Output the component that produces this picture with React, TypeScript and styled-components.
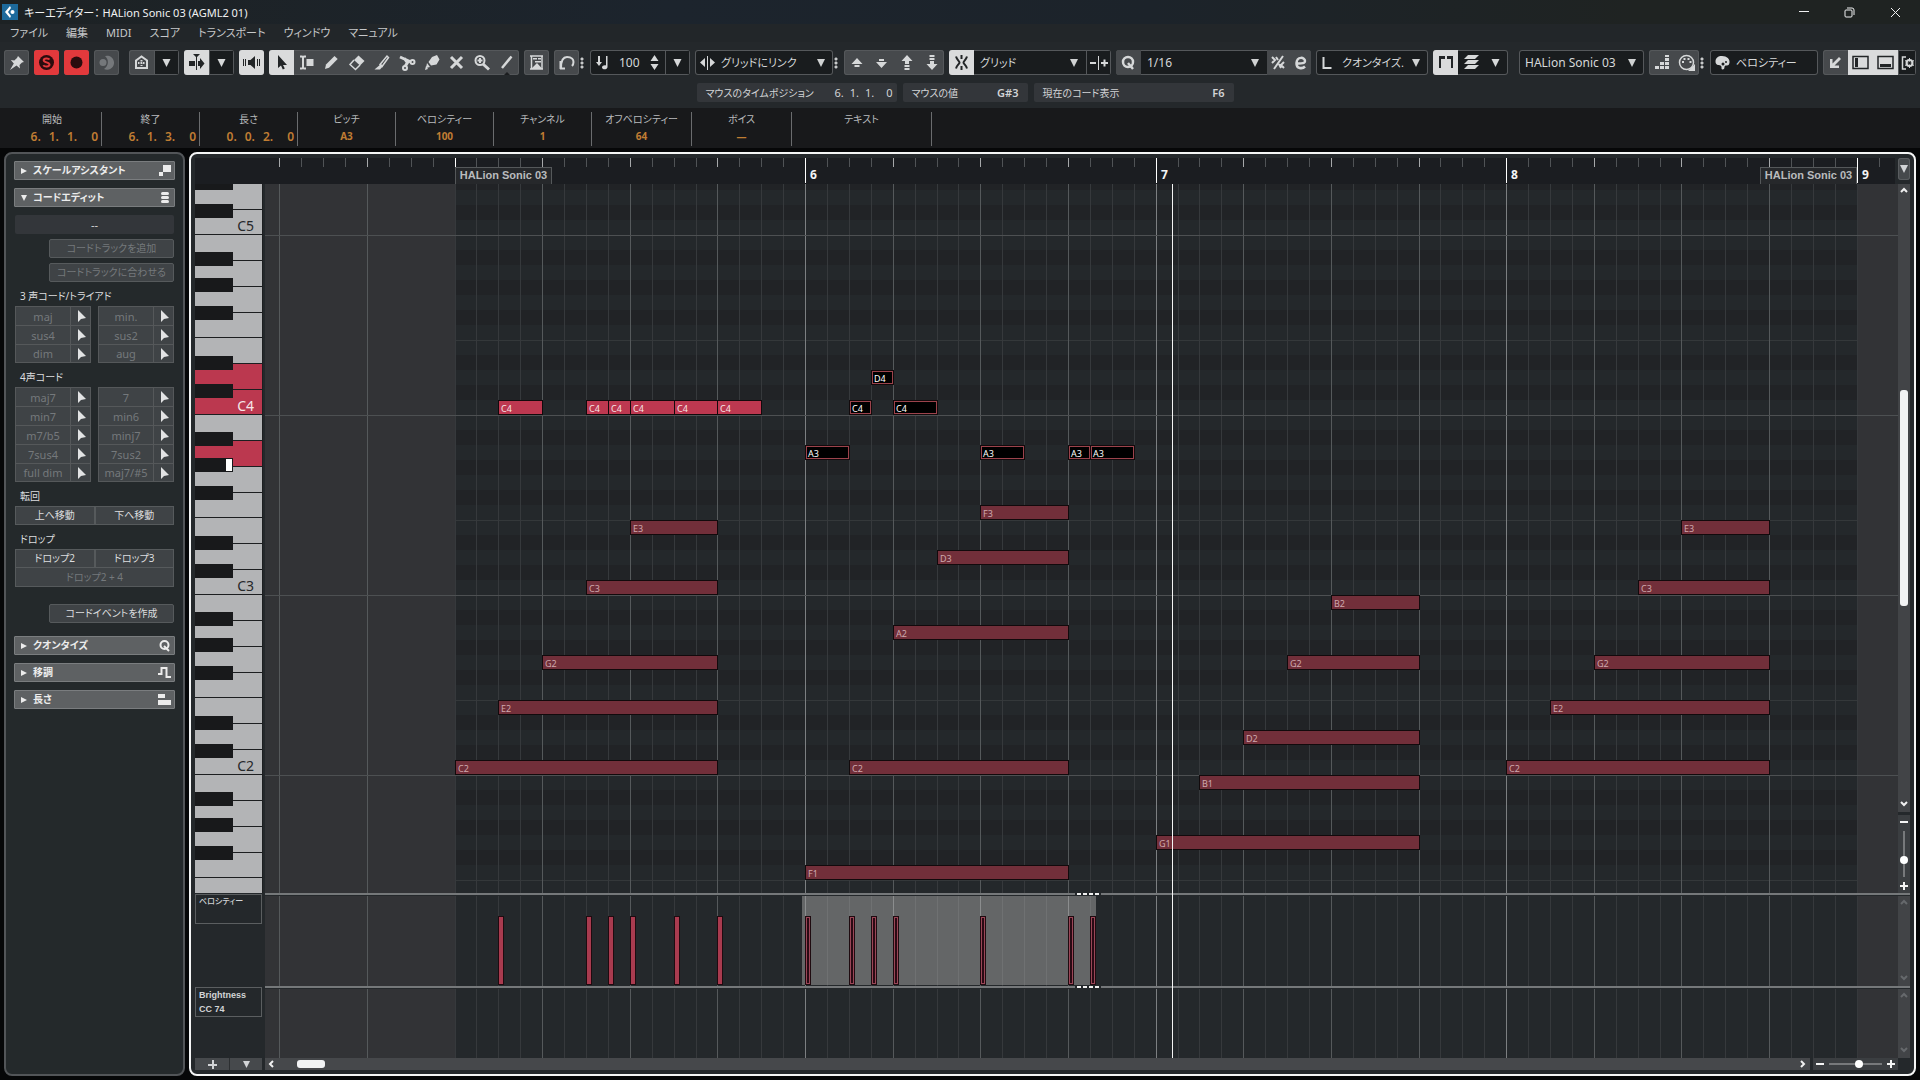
import React from "react";
import styled, { createGlobalStyle, css } from "styled-components";

/* ---------- base ---------- */

const GlobalStyle = createGlobalStyle`
  * { box-sizing: border-box; }
  body {
    margin: 0;
    background: #060708;
    color: #d2d4d6;
    font-family: "Noto Sans", "Noto Sans CJK JP", sans-serif;
    font-feature-settings: "palt";
    font-size: 11px;
  }
  button, input, select {
    font: inherit;
    font-feature-settings: inherit;
    color: inherit;
    margin: 0;
    padding: 0;
    border: 0;
    background: none;
  }
`;

const Window = styled.div`
  display: flex;
  flex-direction: column;
  height: 100vh;
  min-height: 700px;
  overflow: hidden;
`;

/* ---------- title and menu ---------- */

const TitleBar = styled.header`
  display: flex;
  align-items: center;
  height: 24px;
  flex: none;
  padding: 0 2px;
  gap: 6px;
  background: linear-gradient(90deg, #1d2224, #1c242d 35%, #1c232a 60%, #1f2322 85%);
`;

const Title = styled.h1`
  flex: 1;
  margin: 0;
  font-size: 11px;
  font-weight: 400;
  color: #f0f1f2;
  white-space: pre;
`;

const WindowButton = styled.button`
  width: 46px;
  height: 20px;
  display: grid;
  place-items: center;
  color: #f0f1f2;
`;

const WindowButtons = styled.div`
  display: flex;
`;

const MenuBar = styled.nav`
  display: flex;
  height: 18px;
  flex: none;
  padding-left: 1px;
  background: #222629;
`;

const MenuItem = styled.button`
  padding: 0 9px;
  font-size: 11px;
  line-height: 18px;
  color: #c6c8ca;
`;

/* ---------- toolbar ---------- */

const Toolbar = styled.div`
  display: flex;
  gap: 5px;
  flex: none;
  padding: 8px 4px;
  background: #24282b;
`;

const Group = styled.div<{ $w?: number; $gap?: number; $grow?: boolean; $dark?: boolean }>`
  display: flex;
  height: 25px;
  flex: ${(p) => (p.$grow ? "1 1 0" : "none")};
  width: ${(p) => (p.$w ? p.$w + "px" : "auto")};
  margin-right: ${(p) => p.$gap || 0}px;
  border-radius: 3px;
  overflow: hidden;
  background: ${(p) => (p.$dark ? "#191c1e" : "#46494c")};
  box-shadow: inset 0 0 0 1px #55585b;
  color: #d6d8d9;
`;

const Tool = styled.button<{ $tone?: "on" | "red" | "dark" | "dim" | "raised"; $w?: number }>`
  width: ${(p) => p.$w || 25}px;
  height: 25px;
  flex: none;
  display: grid;
  grid-template: 100% / 100%;
  place-items: center;
  ${(p) => p.$tone === "on" && css`background: #dadbdc; color: #222527;`}
  ${(p) => p.$tone === "red" && css`background: #e2393c; color: #2a0c0e;`}
  ${(p) => p.$tone === "dark" && css`background: #191c1e; box-shadow: inset 0 0 0 1px #55585b;`}
  ${(p) => p.$tone === "raised" && css`background: #46494c;`}
  ${(p) => p.$tone === "dim" && css`color: #75787b;`}
`;

const Adorned = styled.div`
  display: flex;
  align-items: center;
`;

const Dots = styled.span`
  width: 6px;
  height: 12px;
  padding-left: 2px;
  background: radial-gradient(circle at 50% 50%, #c8cacb 0 1px, transparent 2px) 1px 0 / 4px 4px repeat-y;
`;

const DropBox = styled.span`
  display: grid;
  flex: 1;
  min-width: 0;
  align-items: center;
`;

const Select = styled.select<{ $pad?: number; $kana?: boolean }>`
  grid-area: 1 / 1;
  appearance: none;
  width: 100%;
  height: 25px;
  padding-left: ${(p) => p.$pad || 6}px;
  font-size: ${(p) => (p.$kana ? 11 : 12)}px;
  background: transparent;
  option { background: #191c1e; }
`;

const Caret = styled.span`
  grid-area: 1 / 1;
  justify-self: end;
  margin-right: 8px;
  width: 0;
  height: 0;
  border: 4px solid transparent;
  border-top: 8px solid #d0d2d3;
  border-bottom: 0;
  pointer-events: none;
`;

const NumberField = styled.input`
  width: 29px;
  height: 25px;
  padding-left: 4px;
  font-size: 12px;
`;

const IconCell = styled.span`
  width: 25px;
  height: 25px;
  flex: none;
`;

const Ico = styled.svg`
  display: block;
  width: 25px;
  height: 25px;
  fill: currentColor;
  stroke: none;
`;

type P = { children: React.ReactNode };
const Icon = ({ children }: P) => <Ico viewBox="0 0 25 25" aria-hidden="true">{children}</Ico>;
const Stroke = ({ d, w = 2, dash }: { d: string; w?: number; dash?: string }) => (
  <path d={d} fill="none" stroke="currentColor" strokeWidth={w} strokeDasharray={dash} />
);
const DownIcon = () => <Icon><path d="M8.500 9h8l-4 8z" /></Icon>;

type DropProps = { label: string; value: string; caret?: boolean; pad?: number; kana?: boolean };
const Drop = ({ label, value, caret = true, pad, kana }: DropProps) => (
  <DropBox>
    <Select aria-label={label} defaultValue={value} $pad={pad} $kana={kana}>
      <option>{value}</option>
    </Select>
    {caret && <Caret />}
  </DropBox>
);

/* ---------- status line ---------- */

const Parts = styled.span<{ $gap: number }>`
  display: flex;
  gap: ${(p) => p.$gap}px;
  span:last-child { margin-left: 6px; }
`;

const Position = ({ value, gap = 6 }: { value: string[]; gap?: number }) => (
  <Parts $gap={gap}>{value.map((v, i) => <span key={i}>{v}</span>)}</Parts>
);

const StatusLine = styled.div`
  display: flex;
  justify-content: center;
  gap: 6px;
  flex: none;
  padding: 0 0 6px 10px;
  background: #24282b;
`;

const Status = styled.div<{ $w: number; $tight?: boolean }>`
  display: flex;
  align-items: center;
  justify-content: space-between;
  width: ${(p) => p.$w}px;
  height: 19px;
  padding: 0 ${(p) => (p.$tight ? 4 : 9)}px 0 9px;
  border-radius: 2px;
  background: #33363a;
  font-size: 10px;
  strong, ${Parts} { font-size: 11px; }
  strong { font-weight: 600; }
`;

/* ---------- info line ---------- */

const InfoLine = styled.dl`
  display: flex;
  flex: none;
  height: 40px;
  margin: 0;
  padding: 4px 0 2px 3px;
  background: #18191b;
`;

const InfoCell = styled.div<{ $w: number; $right?: boolean }>`
  width: ${(p) => p.$w}px;
  border-right: 1px solid #6a6c6e;
  dt {
    text-align: center;
    font-size: 10px;
    line-height: 15px;
    color: #b9bbbd;
  }
  dd {
    display: flex;
    justify-content: ${(p) => (p.$right ? "flex-end" : "center")};
    margin: 0;
    padding-right: ${(p) => (p.$right ? 3 : 0)}px;
    line-height: 19px;
    font-size: ${(p) => (p.$right ? 12 : 10)}px;
    font-weight: ${(p) => (p.$right ? 600 : 700)};
    color: #c07d33;
  }
`;

/* ---------- inspector ---------- */

const Main = styled.main`
  display: flex;
  flex: 1;
  min-height: 0;
  gap: 4px;
  padding: 4px;
`;

const Inspector = styled.aside`
  width: 181px;
  flex: none;
  padding: 7px 8px;
  border: 2px solid #525558;
  border-radius: 8px;
  background: #24292b;
`;

const SectionButton = styled.button`
  display: flex;
  align-items: center;
  width: 100%;
  height: 19px;
  margin-bottom: 8px;
  padding: 0 3px 0 6px;
  border: 1px solid #7a7d7f;
  border-radius: 1px;
  background: #5e6163;
  color: #ececec;
  font-weight: 700;
  text-align: left;
  span { flex: 1; padding-left: 6px; font-size: 10px; line-height: 17px; }
  svg { width: 13px; height: 13px; fill: currentColor; }
  svg:first-child { width: 6px; height: 6px; }
`;

const ChordBody = styled.div`
  display: flex;
  flex-direction: column;
  padding: 0 1px 8px;
`;

const ChordDisplay = styled.output`
  height: 19px;
  margin-bottom: 5px;
  border-radius: 2px;
  background: #33363a;
  text-align: center;
  line-height: 19px;
`;

const button = css`
  height: 19px;
  border: 1px solid #565a5c;
  background: #3f4346;
  font-size: 10px;
  line-height: 17px;
  color: #dcdddf;
  &:disabled { color: #75797c; }
`;

const WideButton = styled.button<{ $top?: number }>`
  ${button}
  margin: ${(p) => p.$top || 0}px 0 5px 34px;
  border-radius: 2px;
`;

const Caption = styled.h2<{ $first?: boolean }>`
  margin: 0 0 1px 5px;
  padding-top: ${(p) => (p.$first ? 0 : 5)}px;
  font-size: 10px;
  font-weight: 400;
  line-height: 18px;
  color: #dcdddf;
`;

const ChordGrid = styled.div`
  display: grid;
  grid-template-columns: 1fr 1fr;
  column-gap: 7px;
`;

const ChordCell = styled.div`
  display: grid;
  grid-template-columns: 1fr 20px;
  height: 19px;
  border: 1px solid #55585a;
  border-bottom-width: 0;
  background: #3f4346;
  &:nth-last-child(-n + 2) { border-bottom-width: 1px; }
  button { line-height: 17px; color: #75797c; display: grid; place-items: center; }
  button + button { padding-left: 1px; border-left: 1px solid #55585a; color: #e2e3e4; }
  svg { width: 9px; height: 12px; fill: currentColor; }
`;

const PairGrid = styled.div`
  display: grid;
  grid-template-columns: 1fr 1fr;
`;

const PairButton = styled.button<{ $wide?: boolean }>`
  ${button}
  ${(p) => p.$wide && css`grid-column: span 2; border-top: 0;`}
  & + & { border-left: ${(p) => (p.$wide ? "1px solid #565a5c" : "0")}; }
`;

/* ---------- editor frame ---------- */

const Editor = styled.section`
  display: grid;
  flex: 1;
  min-width: 0;
  grid-template-columns: 68px minmax(0, 1fr) 12px;
  grid-template-rows: 26px minmax(0, 1fr) 3px 90px 3px 69px 12px;
  padding: 4px;
  border: 2px solid #f4f5f5;
  border-radius: 8px;
  background: #24282b;
`;

const Ruler = styled.div`
  grid-area: 1 / 1 / 2 / 3;
  position: relative;
  overflow: hidden;
  margin-right: 3px;
  padding-left: 70px;
  background: #1b1d21;
`;

const Canvas = styled.div<{ $row: number }>`
  grid-area: ${(p) => p.$row} / 2;
  position: relative;
  overflow: hidden;
  margin-left: 2px;
  background: #24282b;
`;

const RulerCanvas = styled.div`
  position: relative;
  height: 100%;
`;

const Tick = styled.i<{ $kind: Kind }>`
  position: absolute;
  top: 0;
  width: 1px;
  height: ${(p) => (p.$kind === "bar" ? 25 : 9)}px;
  background: ${(p) => (p.$kind === "bar" ? "#ffffff" : p.$kind === "beat" ? "#a6a8aa" : "#505356")};
`;

const BarNumber = styled.b`
  position: absolute;
  top: 9px;
  padding-left: 5px;
  line-height: 16px;
  font-size: 12px;
  color: #f5f5f5;
`;

const PartTag = styled.span<{ $end?: boolean }>`
  position: absolute;
  top: 9px;
  height: 17px;
  width: 97px;
  border: 1px solid #55585a;
  border-bottom: 0;
  background: #26282b;
  text-align: center;
  line-height: 14px;
  font-family: "Liberation Sans", sans-serif;
  font-weight: 700;
  font-size: 11px;
  color: #b9bbbd;
  transform: ${(p) => (p.$end ? "translateX(-100%)" : "none")};
`;

const Outside = styled.div`
  position: absolute;
  top: 0;
  bottom: 0;
  background: #323336;
`;

type Kind = "bar" | "beat" | "step";

const Line = styled.i<{ $kind: Kind; $light?: boolean }>`
  position: absolute;
  top: 0;
  bottom: 0;
  width: 1px;
  background: ${(p) =>
    p.$light
      ? p.$kind === "step" ? "#6f7172" : "#8b8d8e"
      : p.$kind === "bar" ? "#7c7f81" : p.$kind === "beat" ? "#55595b" : "#36393c"};
`;

const Lanes = styled.div`
  margin-top: -9px;
`;

const Lane = styled.div<{ $black: boolean; $edge: boolean }>`
  height: 15px;
  background: ${(p) => (p.$black ? "#212326" : "#24282b")};
  border-top: ${(p) => (p.$edge ? "1px solid #34383a" : "0")};
`;

const OctaveLine = styled.i`
  position: absolute;
  left: 0;
  right: 0;
  height: 1px;
  background: #4d5052;
`;

const NoteBox = styled.div<{ $kind: NoteKind }>`
  position: absolute;
  height: 15px;
  padding-left: 2px;
  overflow: hidden;
  border: 1px solid #120a0c;
  font-size: 9px;
  line-height: 15px;
  ${(p) => p.$kind === "lead" && css`background: #bd3850; color: #f6e6e8;`}
  ${(p) => p.$kind === "picked" && css`background: #000; color: #fff; box-shadow: inset 0 0 0 1px #9c434c;`}
  ${(p) => p.$kind === "chord" && css`background: #722f3a; color: #d0a9ae;`}
`;

const Divider = styled.div<{ $row: number }>`
  grid-area: ${(p) => p.$row} / 2 / auto / 4;
  position: relative;
  margin-left: 2px;
  height: 2px;
  background: #75787a;
`;

const Grip = styled.i`
  position: absolute;
  left: 810px;
  width: 26px;
  height: 2px;
  background: repeating-linear-gradient(90deg, #24282b 0 2px, #f0f0f0 2px 6px);
`;

const Selection = styled.div`
  position: absolute;
  top: 0;
  height: 89px;
  overflow: hidden;
  background: #646667;
`;

const Stick = styled.i<{ $picked: boolean }>`
  position: absolute;
  top: 20px;
  width: 6px;
  height: 69px;
  border: 1px solid #1f0b10;
  background: ${(p) => (p.$picked ? "#2a0a14" : "#a93b4f")};
  box-shadow: ${(p) => (p.$picked ? "inset 0 0 0 1px #9a4657" : "none")};
`;

const Playhead = styled.div`
  grid-area: 2 / 2 / 7 / 3;
  z-index: 3;
  width: 1px;
  margin-left: 909px;
  background: #f4f4f4;
`;

/* ---------- piano ---------- */

const Piano = styled.div`
  grid-area: 2 / 1;
  overflow: hidden;
  background: #b3b4b6;
`;

const WhiteKey = styled.div<{ $h: number; $on: boolean }>`
  position: relative;
  height: ${(p) => p.$h}px;
  border-bottom: 1px solid #1c1e20;
  border-right: 1px solid #1c1e20;
  background: ${(p) => (p.$on ? "#bb384f" : "#b3b4b6")};
  color: ${(p) => (p.$on ? "#f6e6e8" : "#26282a")};
  font-size: 14px;
  line-height: 16px;
  padding: 8px 8px 0 0;
  text-align: right;
`;

const BlackKey = styled.i<{ $top: number; $marked?: boolean }>`
  position: absolute;
  z-index: 1;
  left: 0;
  top: ${(p) => p.$top}px;
  width: 38px;
  height: 14px;
  background: #18191b;
  ${(p) => p.$marked && css`
    &::after {
      content: "";
      display: block;
      width: 6px;
      height: 12px;
      margin: 1px 1px 1px auto;
      background: #fff;
    }
  `}
`;

const LaneName = styled.button<{ $row: number; $small?: boolean }>`
  grid-area: ${(p) => p.$row} / 1 / span 2 / 2;
  height: 30px;
  margin: 1px 1px 0 0;
  padding: 0 3px;
  align-self: start;
  border: 1px solid #5b5e60;
  text-align: left;
  font-family: "Liberation Sans", "Noto Sans CJK JP", sans-serif;
  font-size: ${(p) => (p.$small ? 8 : 9)}px;
  font-weight: ${(p) => (p.$small ? 500 : 700)};
  line-height: 14px;
  display: flex;
  flex-direction: column;
`;

const LaneButtons = styled.div`
  grid-area: 7 / 1;
  display: grid;
  grid-template-columns: 1fr 1fr;
  margin-right: 1px;
  background: #46494c;
  button { display: grid; place-items: center; padding-left: 2px; }
  button + button { border-left: 1px solid #2c2f31; }
  svg { width: 9px; height: 9px; fill: currentColor; }
`;

/* ---------- scroll bars and zoom ---------- */

const Chevron = styled.svg`
  width: 8px;
  height: 8px;
  fill: none;
  stroke: currentColor;
  stroke-width: 2;
`;

const ScrollButton = styled.button`
  width: 12px;
  height: 12px;
  flex: none;
  display: grid;
  place-items: center;
  color: inherit;
`;

const VScroll = styled.div<{ $dim?: boolean }>`
  display: flex;
  flex-direction: column;
  justify-content: space-between;
  flex: 1;
  padding-bottom: 2px;
  background: #424447;
  color: ${(p) => (p.$dim ? "#66696c" : "#f0f0f0")};
`;

const VTrack = styled.div`
  flex: 1;
  display: grid;
  grid-template-rows: 195fr 216fr 193fr;
  i { grid-row: 2; margin: 0 2px; border-radius: 3px; background: #f2f3f4; }
`;

const SideCell = styled.div<{ $row: number }>`
  grid-area: ${(p) => p.$row} / 3;
  display: flex;
  flex-direction: column;
  gap: 3px;
`;

const BottomBar = styled.div`
  grid-area: 7 / 2 / 8 / 3;
  display: flex;
  gap: 3px;
  margin: 0 0 0 2px;
`;

const HScroll = styled.div`
  display: flex;
  align-items: center;
  flex: 1;
  padding-right: 1px;
  background: #46484b;
  color: #f0f0f0;
`;

const HTrack = styled.div`
  flex: 1;
  i { display: block; width: 28px; height: 8px; margin-left: 20px; border-radius: 3px; background: #f2f3f4; }
`;

const ZoomBox = styled.div<{ $vertical?: boolean }>`
  display: flex;
  flex-direction: ${(p) => (p.$vertical ? "column" : "row")};
  align-items: center;
  flex: none;
  width: ${(p) => (p.$vertical ? 12 : 85)}px;
  height: ${(p) => (p.$vertical ? 78 : 12)}px;
  padding: ${(p) => (p.$vertical ? "1px 0" : "0 1px")};
  background: #3b3e41;
  color: #f4f4f4;
`;

const Range = styled.input<{ $vertical?: boolean }>`
  appearance: none;
  flex: 1;
  min-width: 0;
  min-height: 0;
  ${(p) => p.$vertical ? css`writing-mode: vertical-lr; width: 12px; margin: 3px 0;` : css`height: 12px; margin: 0 3px;`}
  background: linear-gradient(#77797b, #77797b) center / ${(p) => (p.$vertical ? "2px 100%" : "100% 2px")} no-repeat;
  &::-webkit-slider-thumb {
    appearance: none;
    width: 8px;
    height: 8px;
    border-radius: 50%;
    background: #fff;
  }
`;

const OptionsButton = styled.button`
  grid-area: 1 / 3;
  display: grid;
  justify-items: center;
  align-content: center;
  height: 22px;
  border-radius: 3px;
  background: #46494c;
  box-shadow: inset 0 0 0 1px #5a5d60;
  svg { width: 8px; height: 8px; fill: currentColor; }
`;

/* ---------- data ---------- */

type NoteKind = "lead" | "picked" | "chord";
type Note = { name: string; start: number; len: number; kind: NoteKind };

const STEP = 21.91;
const ORIGIN = 190;
const ROW = 15;
const KEYS_TOP = 184;
const C4_TOP = 400;

const xOf = (step: number) => Math.floor(ORIGIN + step * STEP);
const SEMI: Record<string, number> = { C: 0, D: 2, E: 4, F: 5, G: 7, A: 9, B: 11 };
const pitchOf = (name: string) => SEMI[name[0]] + 12 * (Number(name[1]) + 1);
const yOf = (name: string) => C4_TOP - KEYS_TOP + (60 - pitchOf(name)) * ROW;

const make = (kind: NoteKind, rows: [string, number, number][]): Note[] =>
  rows.map(([name, start, len]) => ({ name, start, len, kind }));

const NOTES: Note[] = [
  ...make("chord", [
    ["C2", 0, 12], ["E2", 2, 10], ["G2", 4, 8], ["C3", 6, 6], ["E3", 8, 4],
    ["F1", 16, 12], ["C2", 18, 10], ["A2", 20, 8], ["D3", 22, 6], ["F3", 24, 4],
    ["G1", 32, 12], ["B1", 34, 10], ["D2", 36, 8], ["G2", 38, 6], ["B2", 40, 4],
    ["C2", 48, 12], ["E2", 50, 10], ["G2", 52, 8], ["C3", 54, 6], ["E3", 56, 4],
  ]),
  ...make("lead", [["C4", 2, 2], ["C4", 6, 1], ["C4", 7, 1], ["C4", 8, 2], ["C4", 10, 2], ["C4", 12, 2]]),
  ...make("picked", [["A3", 16, 2], ["C4", 18, 1], ["D4", 19, 1], ["C4", 20, 2], ["A3", 24, 2], ["A3", 28, 1], ["A3", 29, 2]]),
];

const kindOf = (s: number): Kind => (s % 16 === 0 ? "bar" : s % 4 === 0 ? "beat" : "step");
const range = (from: number, to: number) => Array.from({ length: to - from + 1 }, (_, i) => from + i);

const GridLines = () => (
  <>
    <Outside style={{ left: 0, width: ORIGIN }} />
    <Outside style={{ left: xOf(64), right: 0 }} />
    {[-8, -4, ...range(0, 64)].map((s) => (
      <Line key={s} $kind={s === 0 || s === 64 ? "step" : s < 0 ? "beat" : kindOf(s)} style={{ left: xOf(s) }} />
    ))}
  </>
);

const WHITE: Record<string, { h: number; black?: number }> = {
  B: { h: 26 }, A: { h: 26, black: -9 }, G: { h: 26, black: -9 }, F: { h: 25, black: -7 },
  E: { h: 26 }, D: { h: 26, black: -8 }, C: { h: 25, black: -6 },
};
const KEYS = ["D5", "C5", ...[4, 3, 2].flatMap((o) => "BAGFEDC".split("").map((k) => k + o)), "B1", "A1", "G1", "F1", "E1"];
const LIT = ["D4", "C4", "A3"];

/* ---------- parts ---------- */

const CursorShape = () => (
  <svg viewBox="0 0 9 12" aria-hidden="true"><path d="M1 0v12l3-3 5-1z" /></svg>
);

const ChordTable = ({ items }: { items: string[] }) => (
  <ChordGrid>
    {items.map((c) => (
      <ChordCell key={c}>
        <button disabled>{c}</button>
        <button aria-label={c + " を適用"}><CursorShape /></button>
      </ChordCell>
    ))}
  </ChordGrid>
);

const Section = ({ title, open, children }: { title: string; open?: boolean; children: React.ReactNode }) => (
  <SectionButton aria-expanded={!!open}>
    <svg viewBox="0 0 6 6" aria-hidden="true"><path d={open ? "M0 0h6L3 6z" : "M0 0v6l6-3z"} /></svg>
    <span>{title}</span>
    <svg viewBox="0 0 13 13" aria-hidden="true">{children}</svg>
  </SectionButton>
);

const Arrow = ({ d, label }: { d: string; label: string }) => (
  <ScrollButton aria-label={label}>
    <Chevron viewBox="0 0 8 8"><path d={d} /></Chevron>
  </ScrollButton>
);
const UP = "M1 6l3-3 3 3";
const DOWN = "M1 2l3 3 3-3";

const TopToolbar = () => (
  <Toolbar>
    <Group>
      <Tool aria-label="ピン"><Icon><path d="M14 6l6 6-2 .5-2.500 2.500.5 3.500-3.500-3L6 20l3.800-6.500-3-3.500 3.500.5L13 8z" /></Icon></Tool>
    </Group>
    <Group>
      <Tool $tone="red" aria-label="ソロ">
        <Icon>
          <circle cx="12.500" cy="12.500" r="7.500" />
          <path d="M15.500 9.500c-1-1.600-5.800-1.600-5.800.8 0 2.600 5.800 1.600 5.800 4.300 0 2.500-5 2.500-6.200.7" fill="none" stroke="#e2393c" strokeWidth="2" />
        </Icon>
      </Tool>
    </Group>
    <Group><Tool $tone="red" aria-label="録音"><Icon><circle cx="12.500" cy="12.500" r="6" /></Icon></Tool></Group>
    <Group $gap={5}>
      <Tool $tone="dim" aria-label="レトロスペクティブ録音">
        <Icon><path d="M11 6a7 7 0 1 1-1 13 8 8 0 0 0 1-13z" /><circle cx="9" cy="12.500" r="3.500" /></Icon>
      </Tool>
    </Group>
    <Group>
      <Tool aria-label="インプットレベル"><Icon><Stroke d="M7 10.500l5.500-4 5.500 4V18H7z" w={2} /><Stroke d="M9 13h7M12.500 10v6" w={2} dash="1.500 1" /></Icon></Tool>
      <Tool $tone="dark" aria-label="メニュー"><DownIcon /></Tool>
    </Group>
    <Group>
      <Tool $tone="on" aria-label="オートスクロール">
        <Icon><path d="M9 4h7l-3 3v13h-1V7zM5 11h6v5H5zM14 11h2V8l4.500 5.500L16 19v-3h-2z" /></Icon>
      </Tool>
      <Tool $tone="dark" aria-label="メニュー"><DownIcon /></Tool>
    </Group>
    <Group>
      <Tool $tone="on" aria-label="試聴">
        <Icon><path d="M4 9h1v7H4zM6 9h1v7H6zM9 10h2.500L16 6v13l-4.500-4H9zM18 9h1v7h-1zM20 9h1v7h-1z" /></Icon>
      </Tool>
    </Group>
    <Group>
      <Tool $tone="on" aria-label="選択"><Icon><path d="M9 5v13l3-2.500 1.800 4 2-1-1.800-3.500h4z" /></Icon></Tool>
      <Tool aria-label="範囲"><Icon><Stroke d="M6 6.500h2l1 1 1-1h2M9 7v11M6 18.500h2l1-1 1 1h2" w={2} /><path d="M12.500 9h7v7h-7z" /></Icon></Tool>
      <Tool aria-label="鉛筆"><Icon><path d="M6 19l1-4.500L15.500 6l3.200 3L10 17.800z" /></Icon></Tool>
      <Tool aria-label="消しゴム"><Icon><path d="M14.500 5.500l6 5.500-4.500 4.500-6-5.500z" /><Stroke d="M10 10l-4 4.500 5.500 5 4.500-4.500" w={1.500} /></Icon></Tool>
      <Tool aria-label="トリム"><Icon><Stroke d="M11 14.500L18 6l1.500 1.500-6.500 9z" w={1.500} /><path d="M12 14l2 2-3 3.500H5.500z" /></Icon></Tool>
      <Tool aria-label="はさみ">
        <Icon><Stroke d="M6 7l11 5M10.500 8.500l3 4-2.500 4" w={3} /><g fill="none" stroke="currentColor" strokeWidth="2"><circle cx="18.500" cy="12" r="2" /><circle cx="11" cy="18" r="2" /></g></Icon>
      </Tool>
      <Tool aria-label="のり"><Icon><path d="M13 7l5-2 2.500 4.500-3 5-5.500 1-2.500-3.500zM8 13l3 4-4 1zM7 16l2 3-3 1z" /></Icon></Tool>
      <Tool aria-label="ミュート"><Icon><Stroke d="M7 7l11 11M18 7L7 18" w={3} /></Icon></Tool>
      <Tool aria-label="ズーム"><Icon><circle cx="11" cy="10.500" r="4.500" fill="none" stroke="currentColor" strokeWidth="2" /><Stroke d="M14 14l6 5.500" w={3} /><Stroke d="M8.500 10.500h5M11 8v5" w={2} /></Icon></Tool>
      <Tool aria-label="ライン"><Icon><Stroke d="M8 18L17.500 6.500" w={2.500} /><path d="M10 25l3-3 3 3z" fill="#1b1d1f" /></Icon></Tool>
    </Group>
    <Group><Tool aria-label="インデペンデント"><Icon><Stroke d="M7.500 19V6M6 6h13M18 6v13M6 19h13" w={1.500} /><path d="M7 19l6-6 5.500 6zM9 8h4v1.500H9zM14 8h3v1.500h-3zM11 11h6v1.500h-6z" /></Icon></Tool></Group>
    <Adorned>
      <Group><Tool aria-label="戻る"><Icon><Stroke d="M6.500 11v8M6 18.500h5M7 18c0-8 2-11 6-11 5 0 6.500 3 6.500 5s-.5 3-1.500 4" w={2} /></Icon></Tool></Group>
      <Dots />
    </Adorned>
    <Group $w={100} $dark>
      <IconCell><Icon><path d="M8 6h2v6h2l-3 4-3-4h2zM16 6h1.500v11c0 3-5.500 3-5.500.5 0-2 2.500-2.500 4-2z" /></Icon></IconCell>
      <Adorned>
        <NumberField aria-label="挿入ベロシティー" defaultValue="100" />
        <Tool $w={21} aria-label="増減"><Icon><path d="M12.500 5l4 6h-8zM12.500 20l4-6h-8z" /></Icon></Tool>
      </Adorned>
      <Tool $tone="dark" aria-label="メニュー"><DownIcon /></Tool>
    </Group>
    <Adorned>
      <Group $w={138} $dark>
        <IconCell><Icon><path d="M12 6h1v14h-1zM10 8v9l-5-4.500zM15 8v9l5-4.500z" /></Icon></IconCell>
        <Drop label="長さクオンタイズ" value="グリッドにリンク" pad={1} kana />
      </Group>
      <Dots />
    </Adorned>
    <Group>
      <Tool aria-label="上へ移調"><Icon><path d="M13 8l5.500 6h-11zM10.500 15h5v2h-5z" /></Icon></Tool>
      <Tool aria-label="下へ移調"><Icon><path d="M12.500 18L7 12h11zM10 9h5v2h-5z" /></Icon></Tool>
      <Tool aria-label="オクターブ上へ"><Icon><path d="M13 5l5.500 6H15v3h-4v-3H7.500zM10.500 15h5v2h-5zM10.500 18h5v2h-5z" /></Icon></Tool>
      <Tool aria-label="オクターブ下へ"><Icon><path d="M13 20l-5.500-6H11v-3h4v3h3.500zM10.500 8h5v2h-5zM10.500 5h5v2h-5z" /></Icon></Tool>
    </Group>
    <Group $w={162} $dark>
      <Tool $tone="on" aria-label="スナップ"><Icon><Stroke d="M12.500 5v4M12.500 16v4M7 6.500c1 3.500 3.500 4.500 3.500 6s-2.500 2.500-3.500 6M18 6.500c-1 3.500-3.500 4.500-3.500 6s2.500 2.500 3.500 6" w={2} /></Icon></Tool>
      <Drop label="スナップタイプ" value="グリッド" kana />
      <Tool $tone="dark" aria-label="グリッド間隔"><Icon><path d="M4 12h6v2H4zM12 6h1v14h-1zM15 12h7v2h-7zM17.500 9.500h2v7h-2z" /></Icon></Tool>
    </Group>
    <Group $w={195} $dark>
      <Tool $tone="raised" aria-label="クオンタイズ適用"><Icon><circle cx="12" cy="12" r="5" fill="none" stroke="currentColor" strokeWidth="2.500" /><Stroke d="M12 13l5 6" w={2.500} /></Icon></Tool>
      <Drop label="クオンタイズ値" value="1/16" />
      <Tool $tone="raised" $w={22} aria-label="ソフトクオンタイズ"><Icon><Stroke d="M8 19l9-13M6 7l3 3-3 3M10 7l2 3M18 12l-3 3 3 3M13 14l2 4" w={2} /></Icon></Tool>
      <Tool $tone="raised" $w={22} aria-label="クオンタイズパネル"><Icon><Stroke d="M8 13.500c9 0 9-1 9-2.500 0-4-8-5-8.500 2-.3 6 6 6 8.500 3.500" w={2.500} /></Icon></Tool>
    </Group>
    <Group $w={112} $dark>
      <IconCell><Icon><Stroke d="M7.500 7v11h8" w={2} /></Icon></IconCell>
      <Drop label="長さ" value="クオンタイズ." pad={1} kana />
    </Group>
    <Group $gap={6} $dark>
      <Tool $tone="on" aria-label="パート境界を表示"><Icon><path d="M6 6h6v3H8v9H6zM14 6h6v12h-2V9h-4z" /></Icon></Tool>
      <Tool aria-label="レイヤー"><Icon><path d="M10 5h11l-4 4H6zM10 10h11l-4 4H6zM10 15h11l-4 4H6z" /></Icon></Tool>
      <Tool aria-label="メニュー"><DownIcon /></Tool>
    </Group>
    <Group $w={125} $dark><Drop label="パート" value="HALion Sonic 03" /></Group>
    <Adorned>
      <Group>
        <Tool aria-label="ステップ入力"><Icon><path d="M6 16h4v3H6zM11 16h4v3h-4zM16 16h4v3h-4zM11 12h4v3h-4zM16 12h4v3h-4zM16 8h4v3h-4zM16 5h4v2h-4z" /></Icon></Tool>
        <Tool aria-label="MIDI入力"><Icon><circle cx="12.500" cy="12.500" r="7" fill="none" stroke="currentColor" strokeWidth="1.500" /><path d="M8 11h2v2H8zM9.500 8h2v2h-2zM13.500 8h2v2h-2zM15.500 11h2v2h-2zM14 21l7-7v7z" /></Icon></Tool>
      </Group>
      <Dots />
    </Adorned>
    <Group $grow $dark>
      <IconCell><Icon><path d="M12 6c5 0 8 3 7.500 6.500-.5 4-2.500 2.500-4 3-2 1 0 4-3 4-2 0 0-3-2-4-2-.5-5-.5-5-4C5.500 8 8 6 12 6z" /><circle cx="13" cy="14" r="1.500" fill="#191c1e" /><circle cx="16" cy="12" r="1" fill="#191c1e" /></Icon></IconCell>
      <Drop label="イベントの色" value="ベロシティー" caret={false} pad={1} kana />
    </Group>
    <Group>
      <Tool aria-label="別ウィンドウ"><Icon><path d="M7 9h2.500v4.500L16 7l2 2-6.500 6.500H16V18H7z" /></Icon></Tool>
      <Tool $tone="on" aria-label="左ゾーン"><Icon><Stroke d="M5 6.500h15v12H5z" w={1.500} /><path d="M7 8h3v9H7z" /></Icon></Tool>
      <Tool $tone="on" aria-label="下ゾーン"><Icon><Stroke d="M5 6.500h15v12H5z" w={1.500} /><path d="M7 14h11v3H7z" /></Icon></Tool>
      <Tool $tone="dark" $w={18} aria-label="設定"><Icon><Stroke d="M11 7H7.500v12H11" w={1.500} /><circle cx="14.500" cy="13" r="3" fill="none" stroke="currentColor" strokeWidth="2" /><Stroke d="M14.500 8v10M10 10.500l9 5M10 15.500l9-5" w={1} /><circle cx="14.500" cy="13" r="1.500" fill="#191c1e" /></Icon></Tool>
    </Group>
  </Toolbar>
);

const INFO: { label: string; w: number; value: React.ReactNode; right?: boolean }[] = [
  { label: "開始", w: 99, value: <Position gap={8} value={["6.", "1.", "1.", "0"]} />, right: true },
  { label: "終了", w: 98, value: <Position gap={8} value={["6.", "1.", "3.", "0"]} />, right: true },
  { label: "長さ", w: 98, value: <Position gap={8} value={["0.", "0.", "2.", "0"]} />, right: true },
  { label: "ピッチ", w: 98, value: "A3" },
  { label: "ベロシティー", w: 98, value: "100" },
  { label: "チャンネル", w: 98, value: "1" },
  { label: "オフベロシティー", w: 100, value: "64" },
  { label: "ボイス", w: 100, value: "—" },
  { label: "テキスト", w: 140, value: "" },
];

export default function App() {
  return (
    <Window>
      <GlobalStyle />
      <TitleBar>
        <svg width="16" height="16" viewBox="0 0 16 16" aria-hidden="true">
          <rect width="16" height="16" fill="#1d6a9c" />
          <path d="M8 2L3 8l5 6 1-2-3-4 3-4z" fill="#fff" />
          <circle cx="10.500" cy="8" r="2" fill="#fff" />
        </svg>
        <Title>キーエディター： HALion Sonic 03 (AGML2 01)</Title>
        <WindowButtons>
          <WindowButton aria-label="最小化"><svg width="11" height="11"><path d="M1 4.500h10" stroke="currentColor" /></svg></WindowButton>
          <WindowButton aria-label="元に戻す"><svg width="11" height="11" fill="none" stroke="currentColor"><rect x="1" y="3" width="7" height="7" rx="1" /><path d="M3 1h5q2 0 2 2v5" /></svg></WindowButton>
          <WindowButton aria-label="閉じる"><svg width="11" height="11"><path d="M1 1l9 9M10 1l-9 9" stroke="currentColor" /></svg></WindowButton>
        </WindowButtons>
      </TitleBar>
      <MenuBar>
        {["ファイル", "編集", "MIDI", "スコア", "トランスポート", "ウィンドウ", "マニュアル"].map((m) => <MenuItem key={m}>{m}</MenuItem>)}
      </MenuBar>
      <TopToolbar />
      <StatusLine>
        <Status $w={200} $tight><span>マウスのタイムポジション</span><Position value={["6.", "1.", "1.", "0"]} /></Status>
        <Status $w={125}><span>マウスの値</span><strong>G#3</strong></Status>
        <Status $w={200}><span>現在のコード表示</span><strong>F6</strong></Status>
      </StatusLine>
      <InfoLine>
        {INFO.map((c) => (
          <InfoCell key={c.label} $w={c.w} $right={c.right}><dt>{c.label}</dt><dd>{c.value}</dd></InfoCell>
        ))}
      </InfoLine>
      <Main>
        <Inspector>
          <Section title="スケールアシスタント"><path d="M5 1h8v7H5zM1 8h4v4H1z" /></Section>
          <Section title="コードエディット" open><rect x="3" y="1" width="8" height="3" rx="1.500" /><rect x="3" y="5" width="8" height="3" rx="1.500" /><rect x="3" y="9" width="8" height="3" rx="1.500" /></Section>
          <ChordBody>
            <ChordDisplay>--</ChordDisplay>
            <WideButton disabled>コードトラックを追加</WideButton>
            <WideButton disabled>コードトラックに合わせる</WideButton>
            <Caption $first>3 声コード/トライアド</Caption>
            <ChordTable items={["maj", "min.", "sus4", "sus2", "dim", "aug"]} />
            <Caption>4声コード</Caption>
            <ChordTable items={["maj7", "7", "min7", "min6", "m7/b5", "minj7", "7sus4", "7sus2", "full dim", "maj7/#5"]} />
            <Caption>転回</Caption>
            <PairGrid><PairButton>上へ移動</PairButton><PairButton>下へ移動</PairButton></PairGrid>
            <Caption>ドロップ</Caption>
            <PairGrid><PairButton>ドロップ2</PairButton><PairButton>ドロップ3</PairButton><PairButton $wide disabled>ドロップ2 + 4</PairButton></PairGrid>
            <WideButton $top={17}>コードイベントを作成</WideButton>
          </ChordBody>
          <Section title="クオンタイズ"><circle cx="6.500" cy="6" r="4" fill="none" stroke="currentColor" strokeWidth="2" /><path d="M6 7l5 5" stroke="currentColor" strokeWidth="2" /></Section>
          <Section title="移調"><path d="M0 8h3.500V2h5v9H13" fill="none" stroke="currentColor" strokeWidth="2" /></Section>
          <Section title="長さ"><path d="M0 1h7v4H0zM0 7h13v5H0z" /></Section>
        </Inspector>
        <Editor>
          <Ruler>
            <RulerCanvas>
              {range(-8, 65).map((s) => <Tick key={s} $kind={kindOf(s)} style={{ left: xOf(s) }} />)}
              <PartTag style={{ left: xOf(0) }}>HALion Sonic 03</PartTag>
              <PartTag $end style={{ left: xOf(64) }}>HALion Sonic 03</PartTag>
              {[6, 7, 8, 9].map((b) => <BarNumber key={b} style={{ left: xOf((b - 5) * 16) }}>{b}</BarNumber>)}
            </RulerCanvas>
          </Ruler>
          <OptionsButton aria-label="ルーラーメニュー"><svg viewBox="0 0 8 8"><path d="M0 0h8L4 8z" /></svg></OptionsButton>

          <Piano>
            {KEYS.map((k) => {
              const key = WHITE[k[0]];
              return (
                <WhiteKey key={k} $h={key.h} $on={LIT.includes(k)}>
                  {key.black !== undefined && <BlackKey $top={key.black} $marked={k === "G3"} />}
                  {k[0] === "C" && k}
                </WhiteKey>
              );
            })}
          </Piano>
          <Canvas $row={2}>
            <Lanes>
              {range(0, 47).map((i) => {
                const n = (75 - i) % 12;
                return <Lane key={i} $black={[1, 3, 6, 8, 10].includes(n)} $edge={n === 4} />;
              })}
            </Lanes>
            <GridLines />
            {[5, 4, 3, 2].map((o) => <OctaveLine key={o} style={{ top: yOf("C" + o) + ROW }} />)}
            {NOTES.map((n, i) => (
              <NoteBox key={i} $kind={n.kind} style={{ left: xOf(n.start), top: yOf(n.name), width: xOf(n.start + n.len) - xOf(n.start) + 1 }}>
                {n.name}
              </NoteBox>
            ))}
          </Canvas>
          <SideCell $row={2}>
            <VScroll>
              <Arrow d={UP} label="上へ" />
              <VTrack><i /></VTrack>
              <Arrow d={DOWN} label="下へ" />
            </VScroll>
            <ZoomBox $vertical>
              <Arrow d="M0 4h8" label="縦に縮小" />
              <Range $vertical type="range" aria-label="縦ズーム" defaultValue={66} />
              <Arrow d="M0 4h8M4 0v8" label="縦に拡大" />
            </ZoomBox>
          </SideCell>

          <Divider $row={3}><Grip /></Divider>
          <LaneName $row={3} $small>ベロシティー</LaneName>
          <Canvas $row={4}>
            <GridLines />
            <Selection style={{ left: 537, width: 294 }}>
              {range(16, 29).map((s) => <Line key={s} $light $kind={kindOf(s)} style={{ left: xOf(s) - 537 }} />)}
            </Selection>
            {NOTES.filter((n) => n.kind !== "chord").map((n) => (
              <Stick key={n.start} $picked={n.kind === "picked"} style={{ left: xOf(n.start) }} />
            ))}
          </Canvas>
          <SideCell $row={4}><VScroll $dim><Arrow d={UP} label="上へ" /><Arrow d={DOWN} label="下へ" /></VScroll></SideCell>

          <Divider $row={5}><Grip /></Divider>
          <LaneName $row={5}><span>Brightness</span><span>CC 74</span></LaneName>
          <Canvas $row={6}><GridLines /></Canvas>
          <SideCell $row={6}><VScroll $dim><Arrow d={UP} label="上へ" /><Arrow d={DOWN} label="下へ" /></VScroll></SideCell>

          <Playhead />

          <LaneButtons>
            <button aria-label="レーンを追加"><svg viewBox="0 0 9 9"><path d="M4 0h2v4h3v2H6v3H4V6H0V4h4z" /></svg></button>
            <button aria-label="レーンメニュー"><svg viewBox="0 0 9 9"><path d="M1 1h7L4.500 8z" /></svg></button>
          </LaneButtons>
          <BottomBar>
            <HScroll>
              <Arrow d="M6 1L3 4l3 3" label="左へ" />
              <HTrack><i /></HTrack>
              <Arrow d="M2 1l3 3-3 3" label="右へ" />
            </HScroll>
            <ZoomBox>
              <Arrow d="M0 4h8" label="横に縮小" />
              <Range type="range" aria-label="横ズーム" defaultValue={58} />
              <Arrow d="M0 4h8M4 0v8" label="横に拡大" />
            </ZoomBox>
          </BottomBar>
        </Editor>
      </Main>
    </Window>
  );
}
